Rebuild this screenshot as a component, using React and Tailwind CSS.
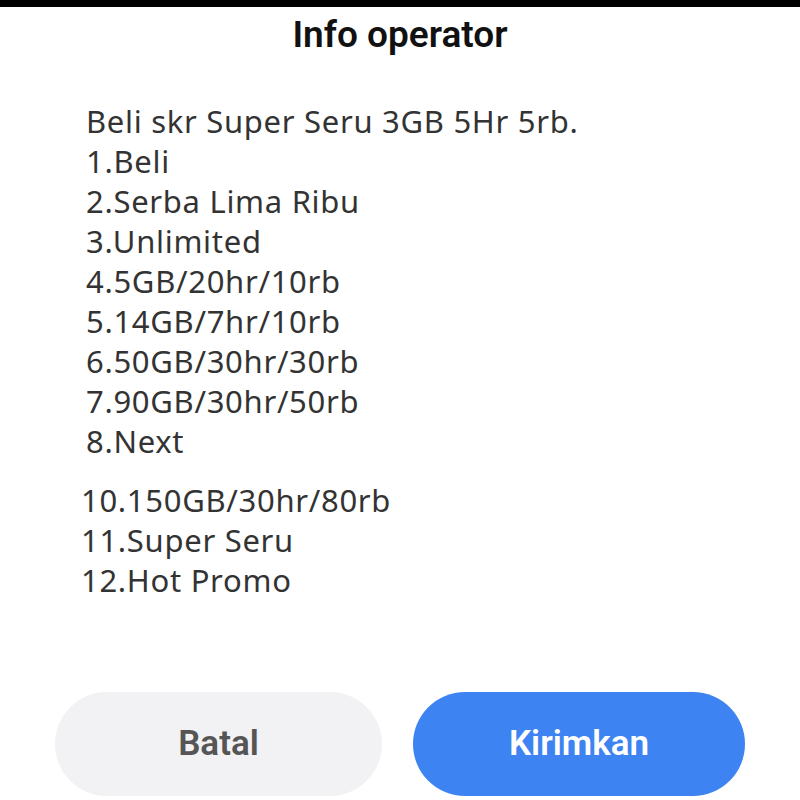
const items = [
  'Beli skr Super Seru 3GB 5Hr 5rb.',
  '1.Beli',
  '2.Serba Lima Ribu',
  '3.Unlimited',
  '4.5GB/20hr/10rb',
  '5.14GB/7hr/10rb',
  '6.50GB/30hr/30rb',
  '7.90GB/30hr/50rb',
  '8.Next',
];

const more = ['10.150GB/30hr/80rb', '11.Super Seru', '12.Hot Promo'];

export default function App() {
  return (
    <div className="w-[800px] h-[800px] bg-white overflow-hidden flex flex-col" style={{ fontFamily: 'Roboto, "Noto Sans", sans-serif' }}>
      <div className="h-[7px] bg-black" />
      {/* title */}
      <div className="pt-[6px] flex justify-center">
        <h1 className="text-[37px] leading-[44px] font-semibold text-[#111]">Info operator</h1>
      </div>

      {/* operator message */}
      <div
        className="pt-[44px] pl-[86px] text-[31px] leading-[40px] tracking-[0.7px] text-[#333]"
        style={{ fontFamily: '"Noto Sans", "Open Sans", sans-serif' }}
      >
        {items.map((t) => (
          <div key={t}>{t}</div>
        ))}
      </div>
      <div
        className="pt-[19px] pl-[81px] text-[31px] leading-[40px] tracking-[0.7px] text-[#333]"
        style={{ fontFamily: '"Noto Sans", "Open Sans", sans-serif' }}
      >
        {more.map((t) => (
          <div key={t}>{t}</div>
        ))}
      </div>

      {/* actions */}
      <div className="mt-auto flex gap-[31px] pl-[55px] pr-[55px] pb-[4px]">
        <button className="w-[327px] h-[104px] rounded-full bg-[#f2f1f3] text-[#555] text-[35px] font-semibold">
          Batal
        </button>
        <button className="w-[332px] h-[104px] rounded-full bg-[#3d83f2] text-white text-[35px] font-semibold">
          Kirimkan
        </button>
      </div>
    </div>
  );
}
